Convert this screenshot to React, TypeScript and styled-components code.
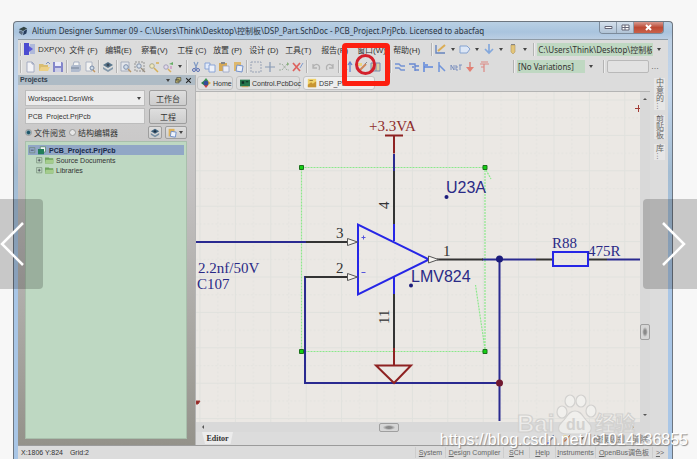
import React from "react";
import styled, { createGlobalStyle, css } from "styled-components";

const UI = '"Noto Sans", "Noto Sans CJK SC", sans-serif';
const ARIAL = '"Liberation Sans", "Noto Sans CJK SC", sans-serif';
const TIMES = '"Liberation Serif", serif';

const GlobalStyle = createGlobalStyle`
  *, *::before, *::after { box-sizing: border-box; }
  html, body { margin: 0; background: #f7f7f7; }
  body { font-family: ${ARIAL}; font-size: 8px; color: #333; overflow: hidden; }
  button, input, select { font: inherit; color: inherit; margin: 0; padding: 0; }
`;

const Page = styled.main`
  position: relative;
  display: flex;
  height: 100vh;
  padding: 21px 24px 0 13px;
`;

const Window = styled.section`
  flex: 1;
  min-width: 0;
  display: flex;
  flex-direction: column;
  border: 1px solid #6d7680;
  border-bottom: 0;
  border-radius: 4px 4px 0 0;
  padding: 0 4px;
  background: linear-gradient(#b9d0e4 0, #a9c4de 10px, #bdd0e4 18px, #c3d6ec 70px, #a3bcd2 150px, #a9c6e6 250px, #a9c6e6 100%);
`;

const TitleBar = styled.header`
  height: 17px;
  flex: none;
  display: flex;
  align-items: center;
  gap: 4px;
  color: #2c3440;
  white-space: nowrap;
`;

const Title = styled.h1`
  flex: 1;
  margin: 0;
  font-family: ${UI};
  font-size: 8px;
  font-weight: 400;
  overflow: hidden;
`;

const Caption = styled.div`
  align-self: flex-start;
  display: flex;
  margin-right: 4px;
  border: 1px solid #7c8b9b;
  border-top: 0;
  border-radius: 0 0 4px 4px;
  overflow: hidden;
`;

const CaptionButton = styled.button<{ $close?: boolean }>`
  width: ${(p) => (p.$close ? 29 : 17)}px;
  height: 11px;
  display: grid;
  place-items: center;
  border: 0;
  border-right: ${(p) => (p.$close ? 0 : "1px solid #8e9dac")};
  background: ${(p) =>
    p.$close ? "linear-gradient(#d79a90, #bd4a35 50%, #c9614a)" : "linear-gradient(#d5e0ec, #b0c3d6)"};
`;

const Client = styled.div`
  flex: 1;
  min-height: 0;
  display: flex;
  flex-direction: column;
  background: #dcdcdc;
  border-top: 1px solid #8f9ba6;
`;

const Bar = styled.div<{ $h: number }>`
  height: ${(p) => p.$h}px;
  flex: none;
  display: flex;
  align-items: center;
  gap: 2px;
  padding: 0 2px;
  white-space: nowrap;
`;

const Menus = styled.nav`
  display: flex;
  margin-left: 2px;
`;

const MenuButton = styled.button<{ $first?: boolean }>`
  width: ${(p) => (p.$first ? 32 : 36)}px;
  height: 14px;
  border: 0;
  background: none;
  font-family: ${ARIAL};
  font-size: 8px;
  text-align: left;
  white-space: nowrap;
`;

const Sep = styled.span`
  width: 2px;
  height: 13px;
  border-left: 1px solid #b4b4b4;
  border-right: 1px solid #ececec;
`;

const Space = styled.span<{ $w: number }>`
  width: ${(p) => p.$w}px;
  flex: none;
`;

const Grow = styled.span<{ $n?: number }>`
  flex: ${(p) => p.$n ?? 1};
`;

const ToolButton = styled.button`
  width: 12px;
  height: 14px;
  flex: none;
  display: grid;
  place-items: center;
  border: 0;
  background: none;
  opacity: 0.85;
`;

const Caret = styled.span`
  width: 8px;
  flex: none;
  display: grid;
  place-items: center;

  &::before {
    content: "";
    border: 2px solid transparent;
    border-top: 3px solid #444;
    border-bottom: 0;
  }
`;

const Pick = styled.select<{ $w: number; $green?: boolean; $boxed?: boolean }>`
  appearance: none;
  width: ${(p) => p.$w}px;
  height: 13px;
  border: ${(p) => (p.$boxed ? "1px solid #b9b9b9" : "0")};
  border-radius: ${(p) => (p.$boxed ? 2 : 0)}px;
  padding: 0 1px;
  background: ${(p) => (p.$green ? "#bfd8c2" : "#e2e2e2")};
  font-family: ${UI};
  font-size: 8px;
  line-height: 11px;
`;

const Body = styled.div`
  flex: 1;
  min-height: 0;
  display: flex;
`;

const Panel = styled.aside`
  width: 177px;
  flex: none;
  display: flex;
  flex-direction: column;
  background: linear-gradient(#d2d2d2, #c4c2c2 30%, #94928a);
`;

const PanelHead = styled.header`
  height: 10px;
  flex: none;
  display: flex;
  align-items: center;
  gap: 3px;
  padding: 0 3px 0 2px;
  background: #aebbc5;
  line-height: 10px;
`;

const PanelTitle = styled.h2`
  flex: 1;
  margin: 0;
  font-size: 7px;
  font-family: ${ARIAL};
  font-weight: 700;
  color: #33414d;
`;

const Form = styled.form`
  display: grid;
  grid-template-columns: 1fr 38px;
  gap: 2px 4px;
  padding: 5px 8px 2px 7px;
`;

const field = css`
  min-width: 0;
  height: 16px;
  border: 1px solid #bdbdbd;
  background: #ececec;
  padding: 0 2px;
  font-family: ${ARIAL};
  font-size: 7px;
`;

const ComboWrap = styled.div`
  display: grid;
  align-items: center;

  & > * { grid-area: 1 / 1; }
  & > span { justify-self: end; margin-right: 2px; pointer-events: none; }
`;

const Combo = styled.select`
  ${field}
  appearance: none;
`;

const Field = styled.input`
  ${field}
`;

const PushButton = styled.button`
  height: 16px;
  display: flex;
  align-items: center;
  justify-content: center;
  border: 1px solid #9e9e9e;
  border-radius: 2px;
  background: linear-gradient(#dedede, #cdcdcd);
  font-size: 8px;
`;

const Options = styled.div`
  flex: none;
  display: flex;
  align-items: center;
  gap: 3px;
  padding: 0 8px 2px 7px;
`;

const Radio = styled.label`
  display: flex;
  align-items: center;
  gap: 2px;
  font-size: 8px;
  white-space: nowrap;

  input {
    appearance: none;
    width: 7px;
    height: 7px;
    border: 1px solid #9a9a9a;
    border-radius: 50%;
    background: #e6e6e6;
  }
  input:checked { background: radial-gradient(#1d5568 35%, #a9c2cc 70%); }
`;

const SmallButton = styled(PushButton)<{ $w: number }>`
  width: ${(p) => p.$w}px;
  height: 13px;
`;

const Tree = styled.ul`
  flex: 1;
  margin: 0 8px 6px 7px;
  padding: 3px 2px;
  border: 1px solid #a9bfac;
  background: #bed8c2;
  list-style: none;
`;

const TreeItem = styled.li<{ $root?: boolean }>`
  display: flex;
  align-items: center;
  gap: 2px;
  height: 10px;
  padding-left: ${(p) => (p.$root ? 1 : 8)}px;
  background: ${(p) => (p.$root ? "#91a7c6" : "none")};
  font-weight: ${(p) => (p.$root ? 700 : 400)};
  font-size: 7px;
  color: ${(p) => (p.$root ? "#182848" : "#333")};
`;

const Editor = styled.section`
  flex: 1;
  min-width: 0;
  display: flex;
  flex-direction: column;
  border-left: 1px solid #b5b5b5;
`;

const Tabs = styled.div`
  height: 17px;
  flex: none;
  display: flex;
  align-items: flex-end;
  gap: 3px;
  padding: 0 1px 1px;
  border-bottom: 1px solid #b4b4b4;
`;

const Tab = styled.button<{ $w: number; $active?: boolean }>`
  width: ${(p) => p.$w}px;
  height: 14px;
  flex: none;
  display: flex;
  align-items: center;
  gap: 2px;
  padding: 0 3px;
  border: 1px solid #c3c3c3;
  border-radius: 3px;
  background: ${(p) => (p.$active ? "#eeeeee" : "#dfdfdf")};
  font-family: ${ARIAL};
  font-size: 7px;
  white-space: nowrap;

  svg { flex: none; }
`;

const SheetArea = styled.div`
  flex: 1;
  min-height: 0;
  display: grid;
  grid-template-columns: 1fr 10px;
  grid-template-rows: 1fr 10px;
`;

const Sheet = styled.div`
  min-width: 0;
  min-height: 0;
  background: #ebe8e4;
  overflow: hidden;

  svg { display: block; width: 100%; height: 100%; }
`;

const Scroll = styled.div<{ $row?: boolean }>`
  display: flex;
  flex-direction: ${(p) => (p.$row ? "row" : "column")};
  align-items: center;
  padding: ${(p) => (p.$row ? "0 4px" : "4px 0")};
  background: #d9d9d9;
`;

const Thumb = styled.span<{ $row?: boolean }>`
  flex: none;
  width: ${(p) => (p.$row ? 20 : 10)}px;
  height: ${(p) => (p.$row ? 9 : 16)}px;
  border: 1px solid #9f9f9f;
  border-radius: 2px;
  background: radial-gradient(#8a8a8a 20%, #d6d6d6 50%);
`;

const Arrow = styled.span<{ $dir: "up" | "down" | "left" | "right" }>`
  border: 2px solid transparent;
  border-bottom-color: #555;
  transform: rotate(${(p) => ({ up: 0, right: 90, down: 180, left: 270 })[p.$dir]}deg);
`;

const EditorFoot = styled.div`
  height: 13px;
  flex: none;
  display: flex;
  align-items: center;
  gap: 7px;
  padding: 0 2px 0 6px;
  color: #777;
`;

const EditorTab = styled.button`
  width: 31px;
  height: 12px;
  align-self: flex-start;
  border: 0;
  background: #ececec;
  clip-path: polygon(0 0, 100% 0, 92% 100%, 10% 100%);
  font-family: ${TIMES};
  font-weight: 700;
  font-size: 8px;
  color: #333;
`;

const Rail = styled.div`
  width: 18px;
  flex: none;
  display: flex;
  flex-direction: column;
  align-items: center;
  gap: 5px;
  padding-top: 3px;
`;

const RailTab = styled.button`
  width: 11px;
  border: 0;
  background: #e6e6e6;
  writing-mode: vertical-rl;
  line-height: 11px;
  font-size: 8px;
  color: #666;
`;

const Status = styled.footer`
  height: 14px;
  flex: none;
  display: flex;
  align-items: center;
  padding: 0 1px 0 3px;
  border-top: 1px solid #9b9b9b;
  font-size: 7px;
  white-space: nowrap;
`;

const Coordinates = styled.span`
  flex: 1;
  display: flex;
  gap: 7px;
`;

const StatusButton = styled.button<{ $w: number }>`
  width: ${(p) => p.$w}px;
  height: 11px;
  border: 0;
  border-left: 1px solid #cdcdcd;
  background: none;
  font-size: 7px;
  line-height: 10px;
  color: #666;
  white-space: nowrap;

  &::first-letter { text-decoration: underline; }
`;

const NavButton = styled.button<{ $side: "left" | "right" }>`
  position: absolute;
  top: 199px;
  ${(p) => p.$side}: 0;
  width: ${(p) => (p.$side === "left" ? 43 : 54)}px;
  height: 90px;
  border: 0;
  border-radius: ${(p) => (p.$side === "left" ? "0 4px 4px 0" : "4px 0 0 4px")};
  background: rgba(0, 0, 0, 0.19);
  display: flex;
  align-items: center;
`;

const Highlight = styled.div`
  position: absolute;
  left: 342px;
  top: 43px;
  width: 48px;
  height: 43px;
  border: 5px solid #fd1f10;
  border-radius: 4px;

  &::after {
    content: "";
    position: absolute;
    left: 8px;
    top: 6px;
    width: 21px;
    height: 21px;
    border: 3px solid #d4202c;
    border-radius: 50%;
  }
`;

const Watermark = styled.div`
  position: absolute;
  right: 9px;
  bottom: 9px;
  font-family: ${ARIAL};
  font-size: 16px;
  line-height: 20px;
  color: #fff;
  text-shadow: 1px 1px 1px #888;
`;

const Brand = styled.svg`
  position: absolute;
  right: 57px;
  bottom: 16px;
`;

const art: Record<string, React.ReactNode> = {
  page: <><path d="M3 1h5l2 2v8H3z" fill="#f8f8fb" stroke="#8b96b5" strokeWidth=".8" /><path d="M8 1v2h2" fill="none" stroke="#8b96b5" /></>,
  open: <><path d="M1 3h4l1 1h4v6H1z" fill="#d8b860" /><path d="M3 6h9l-2 4H1z" fill="#f0cf78" /><path d="M8 3l2-2 2 2" fill="none" stroke="#6d87b8" /></>,
  save: <><path d="M1 1h9l1 1v9H1z" fill="#7478c8" /><path d="M3 1h6v4H3z" fill="#eef" /><path d="M3 7h6v4H3z" fill="#c9cbe8" /></>,
  print: <><path d="M4 1h5v4H3z" fill="#fafafa" stroke="#8d99b4" strokeWidth=".8" /><path d="M1 5l2-1h8v5l-2 2H1z" fill="#a9b6cc" /><path d="M1 7h8" stroke="#64748d" /></>,
  preview: <><path d="M2 1h6v9H2z" fill="#f6f6f6" stroke="#98a2b8" strokeWidth=".8" /><circle cx="8" cy="7" r="2" fill="#cfdcec" stroke="#687e9e" /><path d="M9 9l2 2" stroke="#c08b4a" strokeWidth="1.5" /></>,
  layers: <><path d="M6 1l5 3-5 3-5-3z" fill="#42647e" /><path d="M1 6l5 3 5-3v2l-5 3-5-3z" fill="#768fa4" /><circle cx="6" cy="4" r="1.4" fill="#1d2e42" /></>,
  zoomdoc: <><path d="M1 1h8v9H1z" fill="#e5e8ee" stroke="#8d98ac" strokeWidth=".8" /><circle cx="6" cy="6" r="2.3" fill="#cfdceb" stroke="#6d82a6" /><path d="M8 8l3 3" stroke="#b58b50" strokeWidth="1.5" /></>,
  zoombox: <><path d="M1 1h9v9H1z" fill="none" stroke="#888" strokeDasharray="2 1" /><circle cx="5" cy="5" r="2.2" fill="#d8e2ee" stroke="#72849f" /><path d="M7 7l4 4" stroke="#8d8272" strokeWidth="1.3" /></>,
  zoomsel: <><circle cx="4" cy="5" r="2.3" fill="#f3e9b5" stroke="#a2a184" /><path d="M6 7l4 4M8 2h3" stroke="#d6a83e" strokeWidth="1.5" /></>,
  zoomlast: <><circle cx="4" cy="6" r="2.2" fill="#e5d9ee" stroke="#9998b4" /><path d="M6 8l3 3" stroke="#d8a94a" strokeWidth="1.5" /><path d="M7 3l4-2v3z" fill="#52a552" /><path d="M9 5v3" stroke="#c468b1" /></>,
  cut: <><path d="M4 1l3 7M8 1L5 8" stroke="#728fc0" strokeWidth="1.2" /><circle cx="4" cy="9" r="1.5" fill="none" stroke="#455cae" /><circle cx="8" cy="9" r="1.5" fill="none" stroke="#455cae" /></>,
  copy: <><path d="M1 2h5v6H1z" fill="#e4edff" stroke="#7394d4" strokeWidth=".9" /><path d="M5 4h6v7H5z" fill="#f0f5ff" stroke="#7394d4" strokeWidth=".9" /></>,
  paste: <><path d="M1 2h8v8H1z" fill="#d5a13f" /><path d="M3 1h4v2H3z" fill="#777" /><path d="M5 5h6v6H5z" fill="#eef1fb" stroke="#8d9bc0" strokeWidth=".8" /></>,
  smart: <><path d="M2 1h7v9H2z" fill="#dfb259" /><path d="M5 4l6 1-1 6-6-1z" fill="#eef3fc" stroke="#6285c9" /></>,
  select: <path d="M1 1h10v10H1z" fill="none" stroke="#8f9bb0" strokeDasharray="2 1" />,
  move: <path d="M6 1v10M1 6h10" stroke="#7b8fae" strokeWidth="1.2" />,
  deselect: <><path d="M1 9h3l5-6h2M1 3h3l5 6h2" fill="none" stroke="#94a594" strokeDasharray="2 1" /><path d="M9 1l2 2-2 2z" fill="#79aa6a" /></>,
  clear: <><path d="M1 2l7 8M8 2L1 10" stroke="#df4e49" strokeWidth="1.7" /><path d="M8 7l3-5" stroke="#718fca" /></>,
  undo: <path d="M3 3v4h4M3 6c3-5 8-2 6 3" fill="none" stroke="#aaa" strokeWidth="1.3" />,
  redo: <path d="M9 3v4H5M9 6C6 1 1 4 3 9" fill="none" stroke="#aaa" strokeWidth="1.3" />,
  updown: <path d="M3 1v9M1 8l2 3 2-3M8 11V2M6 4l2-3 2 3" fill="none" stroke="#5076ca" strokeWidth="1.3" />,
  wand: <><path d="M2 2h4v3H2z" fill="#efd36e" /><path d="M3 10l7-7" stroke="#cc7844" strokeWidth="2" /><path d="M9 3l2-2" stroke="#777" /></>,
  book: <><path d="M1 2h9v8H1z" fill="#d9cd9b" stroke="#6b7fa9" /><path d="M6 2v8" stroke="#6b7fa9" /></>,
  wire: <path d="M1 3h4l2 2h4M1 7h4l2 2h4" fill="none" stroke="#6286d2" strokeWidth="1.4" />,
  bus: <path d="M1 3h6v7M4 6h2M7 5h4M7 9h4" fill="none" stroke="#557bd0" strokeWidth="1.4" />,
  harness: <path d="M2 1v10M2 6h9M3 4h3" fill="none" stroke="#4878dc" strokeWidth="1.5" />,
  entry: <path d="M3 1v10M3 4l6 6" fill="none" stroke="#5f89db" strokeWidth="1.5" />,
  net: <path d="M1 9V4l3 5V4M6 4v5h2M6 6h2M9 4h3M10 4v5" fill="none" stroke="#627db8" strokeWidth=".9" />,
  gnd: <><path d="M6 1v6" stroke="#d55d50" strokeWidth="1.2" /><path d="M2 6h8l-4 5z" fill="#e47163" /></>,
  vcc: <path d="M2 3h9M6 3v8M3 1h7M3 6h3" fill="none" stroke="#dc7b74" strokeWidth="1.2" />,
  dxp: <><path d="M0 0h5v12H0z" fill="#3434cf" /><path d="M6 1h5v10H6z" fill="#a8b3da" /><path d="M5 3l4 3-4 3z" fill="#4444d7" /></>,
  draw: <><path d="M1 2v8h9" fill="none" stroke="#5276b9" strokeWidth="1.4" /><path d="M3 8l7-6" stroke="#dba53e" strokeWidth="2" /></>,
  port: <path d="M1 3h7l3 3-3 4H1z" fill="#dce8fa" stroke="#7799cf" />,
  down: <path d="M6 1v8M2 6l4 4 4-4" fill="none" stroke="#75a0dc" strokeWidth="1.7" />,
  pencil: <><path d="M4 2h4v7l-2 2-2-2z" fill="#e5c269" stroke="#a98b4b" strokeWidth=".6" /><path d="M4 1h4v1H4z" fill="#777" /></>,
  marker: <><path d="M4 8l6-7 1 2-5 6z" fill="#5572a8" /><path d="M1 11h3l2-2" fill="none" stroke="#4a4ae0" strokeWidth="1.4" /></>,
  home: <><path d="M6 0l3 4H3z" fill="#3b964a" /><path d="M6 12L3 8h6z" fill="#d4403d" /><path d="M0 6l4-3v6z" fill="#2a8048" /><path d="M12 6L8 3v6z" fill="#e3b634" /><circle cx="6" cy="6" r="3" fill="#344d99" /></>,
  pcb: <><path d="M0 2h12v8H0z" fill="#26764b" /><path d="M2 4h3v3H2zM7 4h3v1H7z" fill="#112f26" /><path d="M2 10h8v1H2z" fill="#c79b3e" /></>,
  sch: <><path d="M1 1h10v10H1z" fill="#f0d269" /><path d="M1 8l4-3 2 2 4-3v7H1z" fill="#c89532" /><path d="M3 3h4" stroke="#8e7230" /></>,
  logo: <><path d="M1 4l6-3 4 2-5 3z" fill="#344" /><path d="M2 5l4 2-1 4-4-3z" fill="#5b6c80" /><path d="M7 6l4-2-1 5-4 2z" fill="#253b5c" /></>,
  folder: <><path d="M0 2h5l1 1h5v7H0z" fill="#6ca35c" /><path d="M1 5h11l-1 5H0z" fill="#a4cc8c" /></>,
  project: <><path d="M3 1h7v7H3z" fill="#f0f6f3" stroke="#56856a" /><path d="M0 4h8v7H0z" fill="#237e59" /></>,
  box: <><path d="M1 1h9v9H1z" fill="none" stroke="#69806c" /><path d="M3 5.500h5" stroke="#223" /></>,
  plus: <><path d="M1 1h9v9H1z" fill="none" stroke="#69806c" /><path d="M3 5.500h5M5.500 3v5" stroke="#223" /></>,
  pin: <path d="M3 1h7v6H3zM1 4h6v6H1z" fill="#c9bf72" stroke="#333" />,
  cross: <path d="M2 2l8 8M10 2l-8 8" stroke="#222" strokeWidth="1.8" />,
};

const Icon = ({ name, size = 12 }: { name: string; size?: number }) => (
  <svg width={size} height={size} viewBox="0 0 12 12" aria-hidden="true">
    {art[name]}
  </svg>
);

const Tool = ({ name }: { name: string }) => (
  <ToolButton type="button" aria-label={name}>
    <Icon name={name} />
  </ToolButton>
);

const MENU = ["文件 (F)", "编辑(E)", "察看(V)", "工程 (C)", "放置 (P)", "设计 (D)", "工具(T)", "报告(R)", "窗口(W)", "帮助(H)"];

const TOOL_GROUPS = [
  ["page", "open", "save"],
  ["print", "preview"],
  ["layers"],
  ["zoomdoc", "zoombox", "zoomsel", "zoomlast", "caret"],
  ["cut", "copy", "paste", "smart"],
  ["select", "move", "deselect", "clear"],
  ["undo", "redo"],
  ["updown", "wand", "book"],
];

const STATUS: [string, number][] = [
  ["System", 30],
  ["Design Compiler", 58],
  ["SCH", 26],
  ["Help", 26],
  ["Instruments", 40],
  ["OpenBus调色板", 57],
  [">>", 15],
];

const Schematic = () => (
  <svg viewBox="196 92 444 330" preserveAspectRatio="xMinYMin slice" role="img" aria-label="Op-amp schematic">
    <defs>
      <pattern id="grid" x="199.5" y="99.5" width="35.4" height="35.4" patternUnits="userSpaceOnUse">
        <path d="M0 .5h36M.5 0v36" stroke="#e0e1dd" />
        <path d="M0 18.5h36M18.5 0v36" stroke="#e2e2de" strokeDasharray="2 2" />
      </pattern>
    </defs>
    <path d="M196 92h444v330H196z" fill="url(#grid)" />
    <g fill="none" stroke="#8ce88c" strokeWidth="1.2" strokeDasharray="2 1">
      <path d="M301.500 167.500H485V351.500H301.500z" />
      <path d="M485 349L475.500 285M486 170l5 9" />
    </g>
    <g fill="none" strokeWidth="2">
      <path d="M196 242h110M499.500 259.500V421M482 259.500h54M607 259.500h33M305 276v107h194.500M394 154v17" stroke="#2a2a90" />
      <path d="M306 242h42M305 277h43M437 259.500h46M536 259.500h17M588 259.500h19M394 171v54M394 294v54" stroke="#333" />
      <path d="M358 224.500v70L429 259.500zM394 224v17M394 277v17M553 252h35v14h-35z" stroke="#2626e6" />
      <path d="M385 135.500h18M394 135.500v18M394 348v17M376 365.500h35L394 383z" stroke="#8e2222" />
    </g>
    <path d="M347.500 238.500v7l10-3.500zM347.500 273.500v7l10-3.500zM428.500 256v7l10-3.500z" fill="#f4f2ee" stroke="#555" />
    <path d="M299.500 165.500h4v4h-4zM483 165.500h4v4h-4zM299.500 349.500h4v4h-4zM483 349.500h4v4h-4z" fill="#14d014" stroke="#1c701c" />
    <circle cx="499.500" cy="259" r="3.500" fill="#1c1c7c" />
    <circle cx="499.500" cy="383" r="3.500" fill="#701830" />
    <circle cx="446.500" cy="197" r="2" fill="#1c1c7c" />
    <circle cx="411" cy="285.500" r="2" fill="#1c1c7c" />
    <path d="M196 401h4l-2 3h-2zM635 108.500h5M638.500 105v7" fill="#8e2222" stroke="#a23c36" />
    <path d="M361.500 237.500h4M363.500 235.500v4M361.500 272.500h4" stroke="#5555dc" />
    <g fontFamily={TIMES} fontSize="15" fill="#2a2a86">
      <text x="369" y="131" fill="#8e2c2c">+3.3VA</text>
      <text x="198" y="273">2.2nf/50V</text>
      <text x="197" y="289">C107</text>
      <text x="552" y="248">R88</text>
      <text x="588" y="256">475R</text>
      <g fill="#333">
        <text x="336" y="238">3</text>
        <text x="336" y="273">2</text>
        <text x="443" y="256">1</text>
        <text transform="translate(389 209) rotate(-90)">4</text>
        <text transform="translate(389 324) rotate(-90)">11</text>
      </g>
    </g>
    <g fontFamily={ARIAL} fontSize="16" fill="#2a2a86">
      <text x="446" y="193">U23A</text>
      <text x="411" y="282">LMV824</text>
    </g>
  </svg>
);

export default function App() {
  return (
    <Page>
      <GlobalStyle />
      <Window>
        <TitleBar>
          <Icon name="logo" size={10} />
          <Title>Altium Designer Summer 09 - C:\Users\Think\Desktop\控制板\DSP_Part.SchDoc - PCB_Project.PrjPcb. Licensed to abacfaq</Title>
          <Caption>
            <CaptionButton aria-label="Minimize"><svg width="9" height="5"><path d="M1 1.500h7v2H1z" fill="#fff" stroke="#667" /></svg></CaptionButton>
            <CaptionButton aria-label="Maximize"><svg width="9" height="7"><path d="M1 1h7v5H1zM4 1v5M1 3.500h7" fill="#fff" stroke="#667" /></svg></CaptionButton>
            <CaptionButton $close aria-label="Close"><svg width="9" height="7"><path d="M2 1l5 5M7 1L2 6" stroke="#fff" strokeWidth="2" /></svg></CaptionButton>
          </Caption>
        </TitleBar>
        <Client>
          <Bar $h={18}>
            <Sep />
            <Tool name="dxp" />
            <MenuButton $first>DXP(X)</MenuButton>
            <Menus>
              {MENU.map((m) => <MenuButton key={m}>{m}</MenuButton>)}
            </Menus>
            <Sep />
            <Tool name="draw" /><Caret />
            <Tool name="port" /><Caret />
            <Tool name="down" /><Caret />
            <Tool name="pencil" /><Caret />
            <Grow />
            <Sep />
            <Pick $w={116} $green aria-label="Path"><option>C:\Users\Think\Desktop\控制板</option></Pick>
            <Caret />
            <Space $w={7} />
          </Bar>
          <Bar $h={17}>
            <Sep />
            {TOOL_GROUPS.map((group, i) => (
              <React.Fragment key={group[0]}>
                {i > 0 && <Sep />}
                {group.map((name) => (name === "caret" ? <Caret key={name} /> : <Tool key={name} name={name} />))}
              </React.Fragment>
            ))}
            <Space $w={4} />
            <Sep />
            {["wire", "bus", "harness", "entry", "net", "gnd", "vcc"].map((name) => <Tool key={name} name={name} />)}
            <Grow />
            <Sep />
            <Pick $w={68} $green aria-label="Variant"><option>[No Variations]</option></Pick>
            <Caret />
            <Space $w={4} />
            <Sep />
            <Pick $w={42} $boxed aria-label="Filter"><option /></Pick>
            <span>…</span>
            <Space $w={5} />
          </Bar>
          <Body>
            <Panel>
              <PanelHead>
                <PanelTitle>Projects</PanelTitle>
                <Caret />
                <Icon name="pin" size={7} />
                <Icon name="cross" size={7} />
              </PanelHead>
              <Form>
                <ComboWrap>
                  <Combo aria-label="Workspace"><option>Workspace1.DsnWrk</option></Combo>
                  <Caret />
                </ComboWrap>
                <PushButton type="button">工作台</PushButton>
                <Field aria-label="Project" defaultValue="PCB_Project.PrjPcb" />
                <PushButton type="button">工程</PushButton>
              </Form>
              <Options>
                <Radio><input type="radio" name="view" defaultChecked />文件阅览</Radio>
                <Radio><input type="radio" name="view" />结构编辑器</Radio>
                <Grow />
                <SmallButton $w={14} type="button" aria-label="Show layers"><Icon name="layers" size={10} /></SmallButton>
                <SmallButton $w={22} type="button" aria-label="Copy view"><Icon name="smart" size={10} /><Caret /></SmallButton>
              </Options>
              <Tree>
                <TreeItem $root><Icon name="box" size={7} /><Icon name="project" size={9} />PCB_Project.PrjPcb</TreeItem>
                <TreeItem><Icon name="plus" size={7} /><Icon name="folder" size={9} />Source Documents</TreeItem>
                <TreeItem><Icon name="plus" size={7} /><Icon name="folder" size={9} />Libraries</TreeItem>
              </Tree>
            </Panel>
            <Editor>
              <Tabs>
                <Tab $w={36}><Icon name="home" size={10} />Home</Tab>
                <Tab $w={64}><Icon name="pcb" size={10} />Control.PcbDoc</Tab>
                <Tab $w={72} $active><Icon name="sch" size={10} />DSP_Part.SchDoc</Tab>
              </Tabs>
              <SheetArea>
                <Sheet><Schematic /></Sheet>
                <Scroll>
                  <Arrow $dir="up" />
                  <Grow $n={3} />
                  <Thumb />
                  <Grow />
                  <Arrow $dir="down" />
                </Scroll>
                <Scroll $row>
                  <Arrow $dir="left" />
                  <Grow $n={3} />
                  <Thumb $row />
                  <Grow $n={4} />
                  <Arrow $dir="right" />
                </Scroll>
                <Scroll />
              </SheetArea>
              <EditorFoot>
                <EditorTab>Editor</EditorTab>
                <Grow />
                <Icon name="marker" size={10} />
                <Icon name="wand" size={9} />
                <Caret />
                <span>掩膜级别</span>
                <span>清除</span>
              </EditorFoot>
            </Editor>
            <Rail>
              <RailTab>中意的…</RailTab>
              <RailTab>剪贴板</RailTab>
              <RailTab>库…</RailTab>
            </Rail>
          </Body>
          <Status>
            <Coordinates><span>X:1806 Y:824</span><span>Grid:2</span></Coordinates>
            {STATUS.map(([label, w]) => <StatusButton key={label} $w={w}>{label}</StatusButton>)}
          </Status>
        </Client>
      </Window>
      <Highlight />
      <Brand width="124" height="52" viewBox="0 0 124 52" role="img" aria-label="Baidu 经验">
        <g fill="#f4f3f1" fillOpacity=".7" stroke="#d2d1cf" strokeWidth="1.200">
          <ellipse cx="46" cy="21" rx="5" ry="6" />
          <ellipse cx="54" cy="10" rx="5" ry="6" />
          <ellipse cx="65" cy="10" rx="5" ry="6" />
          <ellipse cx="75" cy="20" rx="5" ry="6" />
          <path d="M59 20c7 0 8 7 13 11 6 6 3 12-4 12H51c-9 0-11-6-5-12 5-4 6-11 13-11z" />
          <text x="1" y="41" fontFamily={ARIAL} fontWeight="700" fontSize="24">Bai</text>
          <text x="79" y="40" fontFamily={ARIAL} fontWeight="700" fontSize="20">经验</text>
        </g>
        <text x="50" y="39" fontFamily={ARIAL} fontWeight="700" fontSize="16" fill="#d2d1cf">du</text>
      </Brand>
      <Watermark>https://blog.csdn.net/lc1014136855</Watermark>
      <NavButton $side="left" aria-label="Previous">
        <svg width="26" height="48"><path d="M23 3L2 24l21 21" fill="none" stroke="#fff" strokeWidth="2.500" /></svg>
      </NavButton>
      <NavButton $side="right" aria-label="Next">
        <svg width="46" height="48"><path d="M20 3l21 21-21 21" fill="none" stroke="#fff" strokeWidth="2.500" /></svg>
      </NavButton>
    </Page>
  );
}
